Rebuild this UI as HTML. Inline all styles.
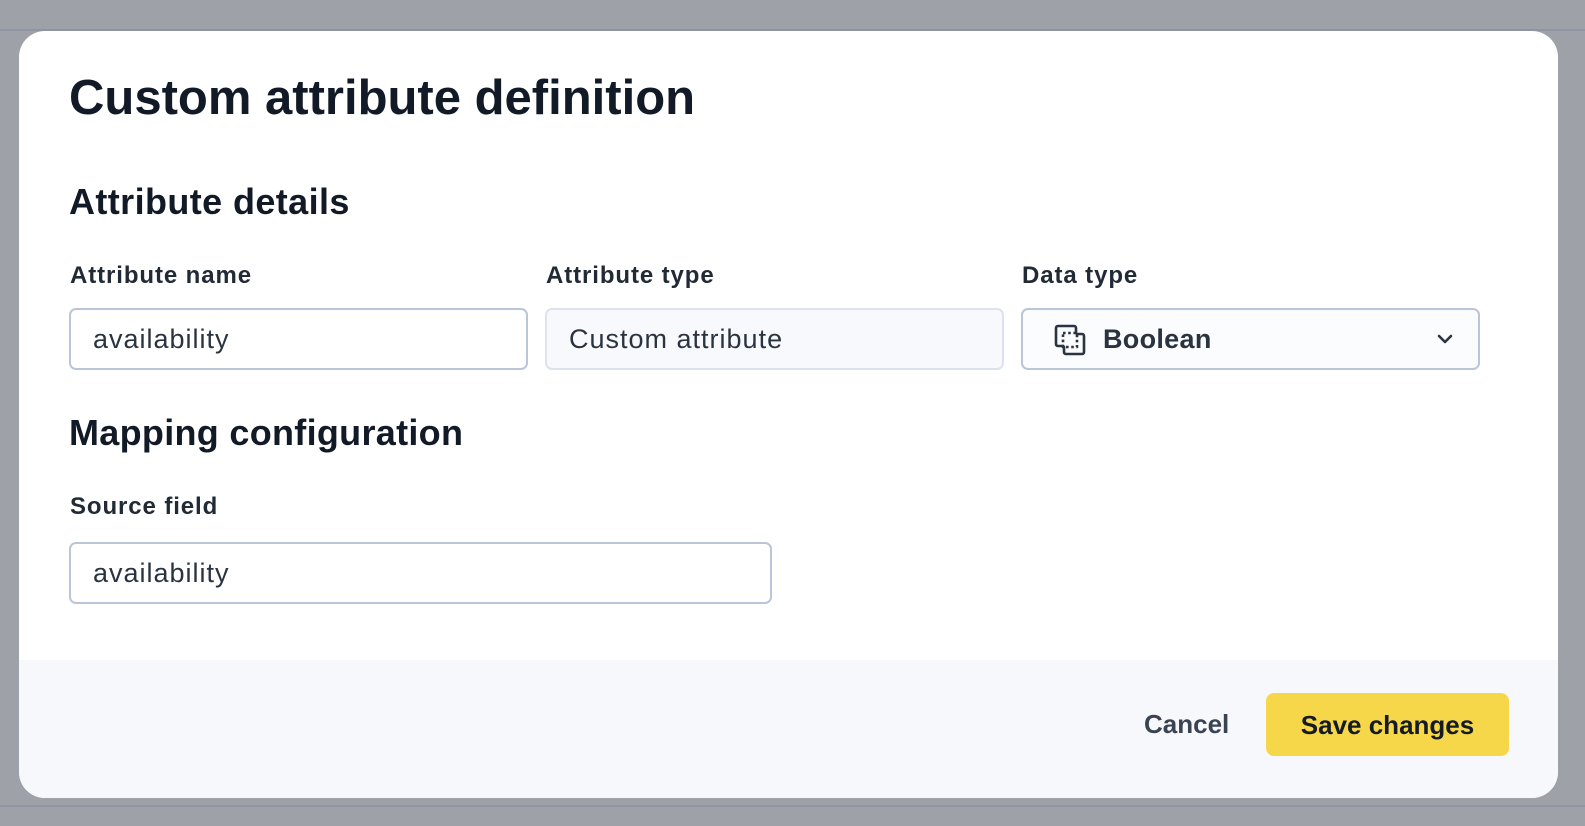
<!DOCTYPE html>
<html><head><style>
*{box-sizing:border-box;margin:0;padding:0}
body{width:1585px;height:826px;background:#9ea1a7;font-family:"Liberation Sans",sans-serif;position:relative;overflow:hidden}
.bgline{position:absolute;left:0;right:0;height:2px;background:#8f95a0}
.modal{position:absolute;left:19px;top:31px;width:1539px;height:767px;background:#fff;border-radius:26px;overflow:hidden}
.t{position:absolute;color:#111a26;font-weight:bold;white-space:nowrap}
.lab{position:absolute;color:#222a36;font-weight:bold;font-size:24px;letter-spacing:0.9px;white-space:nowrap}
.inp{position:absolute;height:62px;border:2px solid #bcc4da;border-radius:7px;font-size:27px;letter-spacing:1px;color:#2a3340;padding-left:22px;line-height:58px;white-space:nowrap}
.footer{position:absolute;left:0;right:0;top:629px;bottom:0;background:#f7f8fb}
</style></head><body>
<div class="bgline" style="top:29px"></div>
<div class="bgline" style="top:805px"></div>
<div class="modal">
<div class="t" style="left:50px;top:39px;font-size:49px">Custom attribute definition</div>
<div class="t" style="left:50px;top:150px;font-size:36px;letter-spacing:0.4px">Attribute details</div>
<div class="lab" style="left:51px;top:231px">Attribute name</div>
<div class="lab" style="left:527px;top:231px">Attribute type</div>
<div class="lab" style="left:1003px;top:231px">Data type</div>
<div class="inp" style="left:50px;top:277px;width:459px">availability</div>
<div class="inp" style="left:526px;top:277px;width:459px;background:#f8f9fc;border-color:#dde2ee">Custom attribute</div>
<div class="inp" style="left:1002px;top:277px;width:459px;background:#fbfcfe;font-weight:bold;letter-spacing:0.3px;padding-left:80px">Boolean
<svg style="position:absolute;left:30px;top:13px" width="34" height="34" viewBox="0 0 34 34" fill="none" stroke="#2a3340" stroke-width="2.6" stroke-linejoin="round" stroke-linecap="round"><path d="M10 23H5a2 2 0 0 1-2-2V5a2 2 0 0 1 2-2h16a2 2 0 0 1 2 2v5"/><path d="M24 11h5a2 2 0 0 1 2 2v16a2 2 0 0 1-2 2H13a2 2 0 0 1-2-2v-5"/><rect x="10" y="10" width="14" height="14" stroke-dasharray="2.6 2.6" stroke-linecap="butt"/></svg>
<svg style="position:absolute;right:24px;top:22px" width="18" height="14" viewBox="0 0 18 14" fill="none" stroke="#2a3340" stroke-width="2.6" stroke-linecap="round" stroke-linejoin="round"><path d="M3 4l6 6 6-6"/></svg>
</div>
<div class="t" style="left:50px;top:381px;font-size:36px;letter-spacing:0.3px">Mapping configuration</div>
<div class="lab" style="left:51px;top:462px">Source field</div>
<div class="inp" style="left:50px;top:511px;width:703px">availability</div>
<div class="footer">
<div class="t" style="left:1125px;top:49px;font-size:26px;color:#3a4352">Cancel</div>
<div style="position:absolute;left:1247px;top:33px;width:243px;height:63px;background:#f7d74a;border-radius:8px;font-weight:bold;font-size:26px;color:#141b24;text-align:center;line-height:65px">Save changes</div>
</div>
</div>
</body></html>
